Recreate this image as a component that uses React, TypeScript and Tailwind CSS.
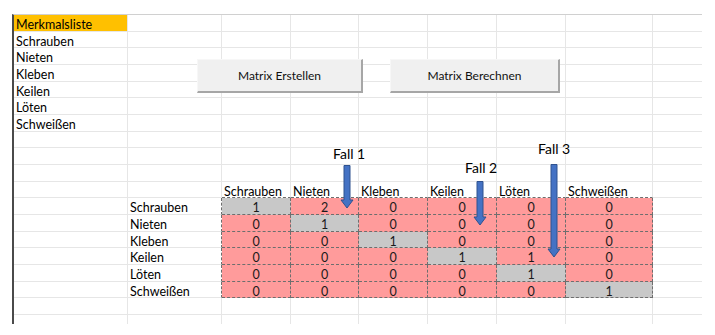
import React from 'react';

const features = ['Schrauben', 'Nieten', 'Kleben', 'Keilen', 'Löten', 'Schweißen'];

const matrix = [
    [1, 2, 0, 0, 0, 0],
    [0, 1, 0, 0, 0, 0],
    [0, 0, 1, 0, 0, 0],
    [0, 0, 0, 1, 1, 0],
    [0, 0, 0, 0, 1, 0],
    [0, 0, 0, 0, 0, 1],
];

const ROWS = 19;
const COLS = 9;

// what goes into a cell, and how it looks
const cellContent = (r: number, c: number) => {
    if (c === 0 && r === 0) return 'Merkmalsliste';
    if (c === 0 && r >= 1 && r <= 6) return features[r - 1];
    if (r === 10 && c >= 2 && c <= 7) return features[c - 2];
    if (r >= 11 && r <= 16 && c === 1) return features[r - 11];
    if (r >= 11 && r <= 16 && c >= 2 && c <= 7) return String(matrix[r - 11][c - 2]);
    return '';
};

const cellClass = (r: number, c: number) => {
    const last = r === ROWS - 1;
    const lastCol = c === COLS - 1;
    const inMatrix = r >= 11 && r <= 16 && c >= 2 && c <= 7;

    if (inMatrix) {
        const diag = r - 11 === c - 2;
        return `border-r border-b border-dashed border-[#6e6e6e] text-center text-[#1a1a1a] ${diag ? 'bg-[#c8c8c8]' : 'bg-[#ff9b9b]'}`;
    }
    if (r === 10 && c >= 2 && c <= 7) {
        return 'border-r border-r-[#e6e6e6] border-b [border-bottom-style:dashed] border-b-[#6e6e6e] px-[2px]';
    }
    if (r >= 11 && r <= 16 && c === 1) {
        return 'border-b border-b-[#e6e6e6] border-r [border-right-style:dashed] border-r-[#6e6e6e] px-[2px]';
    }
    if (r === 0 && c === 0) {
        return 'border-r border-b border-[#e6e6e6] bg-[#ffc000] px-[2px]';
    }
    if (last) return lastCol ? '' : 'border-r border-[#e6e6e6]';
    return lastCol ? 'border-b border-[#e6e6e6] px-[2px]' : 'border-r border-b border-[#e6e6e6] px-[2px]';
};

const Arrow = ({ x, top, tip }: { x: number; top: number; tip: number }) => {
    // shaft 6px wide, head 12px wide, 8px tall
    const h = tip - top;
    return (
        <svg
            className="absolute"
            style={{ left: x - 7, top }}
            width={14}
            height={h + 1}
            viewBox={`0 0 14 ${h + 1}`}
        >
            <polygon
                points={`4,0.5 10,0.5 10,${h - 8} 13,${h - 8} 7,${h} 1,${h - 8} 4,${h - 8}`}
                fill="#4472c4"
                stroke="#2f528f"
                strokeWidth={1}
            />
        </svg>
    );
};

const SheetButton = ({ label, className }: { label: string; className: string }) => (
    <div
        className={`absolute flex items-center justify-center bg-[#f0f0f0] border-t border-l border-[#f7f7f7] border-r-2 border-b-2 border-r-[#a6a6a6] border-b-[#a6a6a6] text-[12px] text-[#111] ${className}`}
    >
        {label}
    </div>
);

export default function App() {
    return (
        <div className="relative w-[715px] h-[335px] bg-white overflow-hidden font-['Lato','Liberation_Sans',Arial,sans-serif] text-black">
            <div className="pt-[14px] pl-[12px]">
                <div className="grid w-[690px] grid-cols-[114px_94px_69px_68px_69px_69px_69px_87px_49px] grid-rows-[repeat(18,16.67px)_9px] border-l-2 border-l-[#4a4a4a] border-t border-t-[#d0d0d0]">
                    {Array.from({ length: ROWS }).map((_, r) =>
                        Array.from({ length: COLS }).map((_, c) => (
                            <div
                                key={`${r}-${c}`}
                                className={`text-[12.5px] leading-[16px] pt-[2px] whitespace-nowrap overflow-hidden ${cellClass(r, c)}`}
                            >
                                {cellContent(r, c)}
                            </div>
                        ))
                    )}
                </div>
            </div>

            {/* sheet buttons */}
            <SheetButton label="Matrix Erstellen" className="left-[197px] top-[59px] w-[166px] h-[34px]" />
            <SheetButton label="Matrix Berechnen" className="left-[390px] top-[59px] w-[170px] h-[34px]" />

            {/* annotations */}
            <div className="absolute left-[333px] top-[146px] text-[14px] leading-[16px]">Fall 1</div>
            <div className="absolute left-[465px] top-[160px] text-[14px] leading-[16px]">Fall 2</div>
            <div className="absolute left-[538px] top-[141px] text-[14px] leading-[16px]">Fall 3</div>

            <Arrow x={347} top={165} tip={208} />
            <Arrow x={480} top={181} tip={225} />
            <Arrow x={554} top={164} tip={257} />
        </div>
    );
}
